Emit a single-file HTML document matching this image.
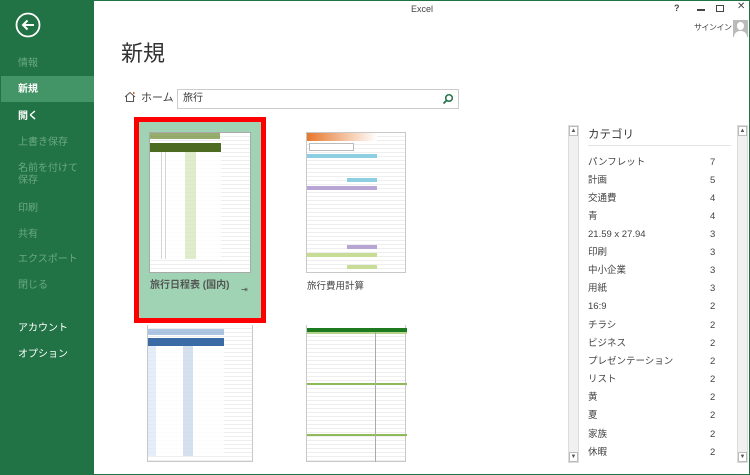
<!DOCTYPE html>
<html><head><meta charset="utf-8"><style>
*{margin:0;padding:0;box-sizing:border-box}
body{width:750px;height:475px;overflow:hidden;background:#fff;font-family:"Liberation Sans","Noto Sans CJK JP",sans-serif;position:relative;color:#444;line-height:1.2}
.abs{position:absolute}
#side{left:0;top:0;width:94px;height:475px;background:#217346}
.si{position:absolute;left:18px;font-size:10px;color:#fff;white-space:nowrap;line-height:12px}
.dis{color:#6aa882}
#frame{left:0;top:0;width:750px;height:475px;border:1px solid #217346;pointer-events:none}
.thumb{position:absolute;background:#fff;border:1px solid #c8c8c8}
.grid{background-image:repeating-linear-gradient(#fff 0 3px,#eeeeee 3px 4px)}
.cat{position:absolute;left:588px;font-size:9.5px;color:#444;white-space:nowrap;line-height:12px;margin-top:2px}
.num{position:absolute;left:710px;font-size:9.5px;color:#444;line-height:12px;margin-top:2px}
.sb{position:absolute;width:11px;background:#f0f0f0;border:1px solid #dcdcdc}
.arr{position:absolute;left:0;width:9px;height:10px;background:#fff;border:1px solid #bbb;font-size:6px;line-height:8px;text-align:center;color:#555}
</style></head><body>
<div id="side" class="abs">
 <svg class="abs" style="left:15px;top:12px" width="26" height="26" viewBox="0 0 26 26"><circle cx="13" cy="13" r="11.5" fill="none" stroke="#fff" stroke-width="1.8"/><path d="M19 13H8M12.5 8.5L8 13l4.5 4.5" fill="none" stroke="#fff" stroke-width="2"/></svg>
 <div class="si dis" style="top:58px">情報</div>
 <div class="abs" style="left:1px;top:76px;width:93px;height:26px;background:#439467"></div>
 <div class="si" style="top:84px;font-weight:bold">新規</div>
 <div class="si" style="top:111px;font-weight:bold">開く</div>
 <div class="si dis" style="top:137px">上書き保存</div>
 <div class="si dis" style="top:163px">名前を付けて<br>保存</div>
 <div class="si dis" style="top:203px">印刷</div>
 <div class="si dis" style="top:229px">共有</div>
 <div class="si dis" style="top:254px">エクスポート</div>
 <div class="si dis" style="top:280px">閉じる</div>
 <div class="si" style="top:323px">アカウント</div>
 <div class="si" style="top:349px">オプション</div>
</div>
<div class="abs" style="left:0;width:750px;text-align:center;font-size:9px;top:4px;color:#444;padding-left:94px">Excel</div>
<div class="abs" style="left:674px;top:3px;font-size:9px;color:#444;font-weight:bold">?</div>
<div class="abs" style="left:697px;top:9px;width:8px;height:1.5px;background:#444"></div>
<div class="abs" style="left:716px;top:5px;width:8px;height:7px;border:1px solid #444"></div>
<div class="abs" style="left:737px;top:1px;font-size:10px;color:#444">✕</div>
<div class="abs" style="left:694px;top:23px;font-size:8px;color:#444;white-space:nowrap;letter-spacing:-0.5px">サインイン</div>
<div class="abs" style="left:733px;top:20px;width:15px;height:17px;background:#bbb;overflow:hidden"><div class="abs" style="left:4px;top:2px;width:7px;height:8px;border-radius:50%;background:#fff"></div><div class="abs" style="left:1px;top:11px;width:13px;height:10px;border-radius:6px 6px 0 0;background:#fff"></div></div>
<div class="abs" style="left:121px;top:41px;font-size:22px;color:#333">新規</div>
<svg class="abs" style="left:124px;top:91px" width="12" height="12" viewBox="0 0 12 12"><path d="M1 6L6 1.5 11 6M2.5 5v5.5h7V5" fill="none" stroke="#555" stroke-width="1"/><rect x="9" y="1" width="1.5" height="2" fill="#e05a2a"/></svg>
<div class="abs" style="left:141px;top:92px;font-size:11px;color:#444;white-space:nowrap">ホーム</div>
<div class="abs" style="left:177px;top:89px;width:282px;height:20px;border:1px solid #ccc;font-size:10px;padding:3px 5px;color:#333">旅行</div>
<svg class="abs" style="left:442px;top:93px" width="12" height="12" viewBox="0 0 12 12"><circle cx="7" cy="5" r="3.3" fill="none" stroke="#217346" stroke-width="1.5"/><path d="M4.5 7.5L1.5 10.5" stroke="#217346" stroke-width="1.8"/></svg>

<div class="abs" style="left:134px;top:117px;width:132px;height:206px;border:5px solid #f00;background:#9fd3b3"></div>
<div class="thumb grid" style="left:149px;top:132px;width:102px;height:141px;border-color:#aaa">
 <div class="abs" style="left:0;top:0;width:70px;height:6px;background:#6b8a2f;opacity:.7"></div>
 <div class="abs" style="left:0;top:10px;width:71px;height:9px;background:#4e6b22"></div>
 <div class="abs" style="left:0;top:19px;width:71px;height:107px;background:repeating-linear-gradient(90deg,#fff 0 11px,#ccc 11px 12px,#fff 12px 15px,#ccc 15px 16px,#fff 16px 35px,#d8e8c0 35px 46px,#fff 46px 71px);opacity:.8"></div>
</div>
<div class="abs" style="left:150px;top:280px;font-size:10px;color:#555;font-weight:bold;white-space:nowrap">旅行日程表 (国内)</div>
<div class="abs" style="left:241px;top:285px;font-size:8px;color:#555">⇥</div>

<div class="thumb grid" style="left:306px;top:132px;width:100px;height:141px">
 <div class="abs" style="left:0;top:0;width:70px;height:8px;background:linear-gradient(90deg,#e7772c,#fff)"></div>
 <div class="abs" style="left:2px;top:10px;width:45px;height:8px;border:1px solid #bbb;background:#fff"></div>
 <div class="abs" style="left:0;top:21px;width:70px;height:4px;background:#8ccfe0"></div>
 <div class="abs" style="left:40px;top:45px;width:30px;height:4px;background:#8ccfe0"></div>
 <div class="abs" style="left:0;top:53px;width:70px;height:4px;background:#b9a5d3"></div>
 <div class="abs" style="left:40px;top:112px;width:30px;height:4px;background:#b9a5d3"></div>
 <div class="abs" style="left:0;top:120px;width:70px;height:4px;background:#c7dd95"></div>
 <div class="abs" style="left:40px;top:132px;width:30px;height:4px;background:#c7dd95"></div>
</div>
<div class="abs" style="left:307px;top:281px;font-size:9.5px;color:#444;white-space:nowrap">旅行費用計算</div>

<div class="thumb grid" style="left:147px;top:325px;width:106px;height:137px;border-top:none">
 <div class="abs" style="left:0;top:4px;width:76px;height:6px;background:#7aa0d0;opacity:.6"></div>
 <div class="abs" style="left:0;top:13px;width:76px;height:8px;background:#3b6ba5"></div>
 <div class="abs" style="left:0;top:21px;width:76px;height:110px;background:repeating-linear-gradient(90deg,#dde9f7 0 8px,#fff 8px 35px,#cbd9ea 35px 45px,#fff 45px 76px);opacity:.8"></div>
</div>
<div class="thumb grid" style="left:306px;top:325px;width:100px;height:137px;border-top:none">
 <div class="abs" style="left:0;top:3px;width:100px;height:4px;background:#1e7a1e"></div>
 <div class="abs" style="left:0;top:7px;width:100px;height:2px;background:#b7d48c"></div>
 <div class="abs" style="left:0;top:58px;width:100px;height:2px;background:#8fba5a"></div>
 <div class="abs" style="left:0;top:109px;width:100px;height:2px;background:#8fba5a"></div>
 <div class="abs" style="left:68px;top:7px;width:1px;height:130px;background:#aaa"></div>
</div>

<div class="sb" style="left:568px;top:125px;height:338px"><div class="arr" style="top:0">▲</div><div class="arr" style="bottom:0">▼</div></div>
<div class="sb" style="left:737px;top:125px;height:338px"><div class="arr" style="top:0">▲</div><div class="arr" style="bottom:0">▼</div></div>
<div class="abs" style="left:588px;top:128px;font-size:11.5px;color:#333;line-height:14px">カテゴリ</div>
<div class="abs" style="left:588px;top:145px;width:143px;height:1px;background:#e3e3e3"></div>
<div class="cat" style="top:155px">パンフレット</div><div class="num" style="top:155px">7</div>
<div class="cat" style="top:173px">計画</div><div class="num" style="top:173px">5</div>
<div class="cat" style="top:191px">交通費</div><div class="num" style="top:191px">4</div>
<div class="cat" style="top:209px">青</div><div class="num" style="top:209px">4</div>
<div class="cat" style="top:227px">21.59 x 27.94</div><div class="num" style="top:227px">3</div>
<div class="cat" style="top:245px">印刷</div><div class="num" style="top:245px">3</div>
<div class="cat" style="top:263px">中小企業</div><div class="num" style="top:263px">3</div>
<div class="cat" style="top:281px">用紙</div><div class="num" style="top:281px">3</div>
<div class="cat" style="top:299px">16:9</div><div class="num" style="top:299px">2</div>
<div class="cat" style="top:318px">チラシ</div><div class="num" style="top:318px">2</div>
<div class="cat" style="top:336px">ビジネス</div><div class="num" style="top:336px">2</div>
<div class="cat" style="top:354px">プレゼンテーション</div><div class="num" style="top:354px">2</div>
<div class="cat" style="top:372px">リスト</div><div class="num" style="top:372px">2</div>
<div class="cat" style="top:390px">黄</div><div class="num" style="top:390px">2</div>
<div class="cat" style="top:408px">夏</div><div class="num" style="top:408px">2</div>
<div class="cat" style="top:427px">家族</div><div class="num" style="top:427px">2</div>
<div class="cat" style="top:445px">休暇</div><div class="num" style="top:445px">2</div>
<div id="frame" class="abs"></div>
</body></html>
